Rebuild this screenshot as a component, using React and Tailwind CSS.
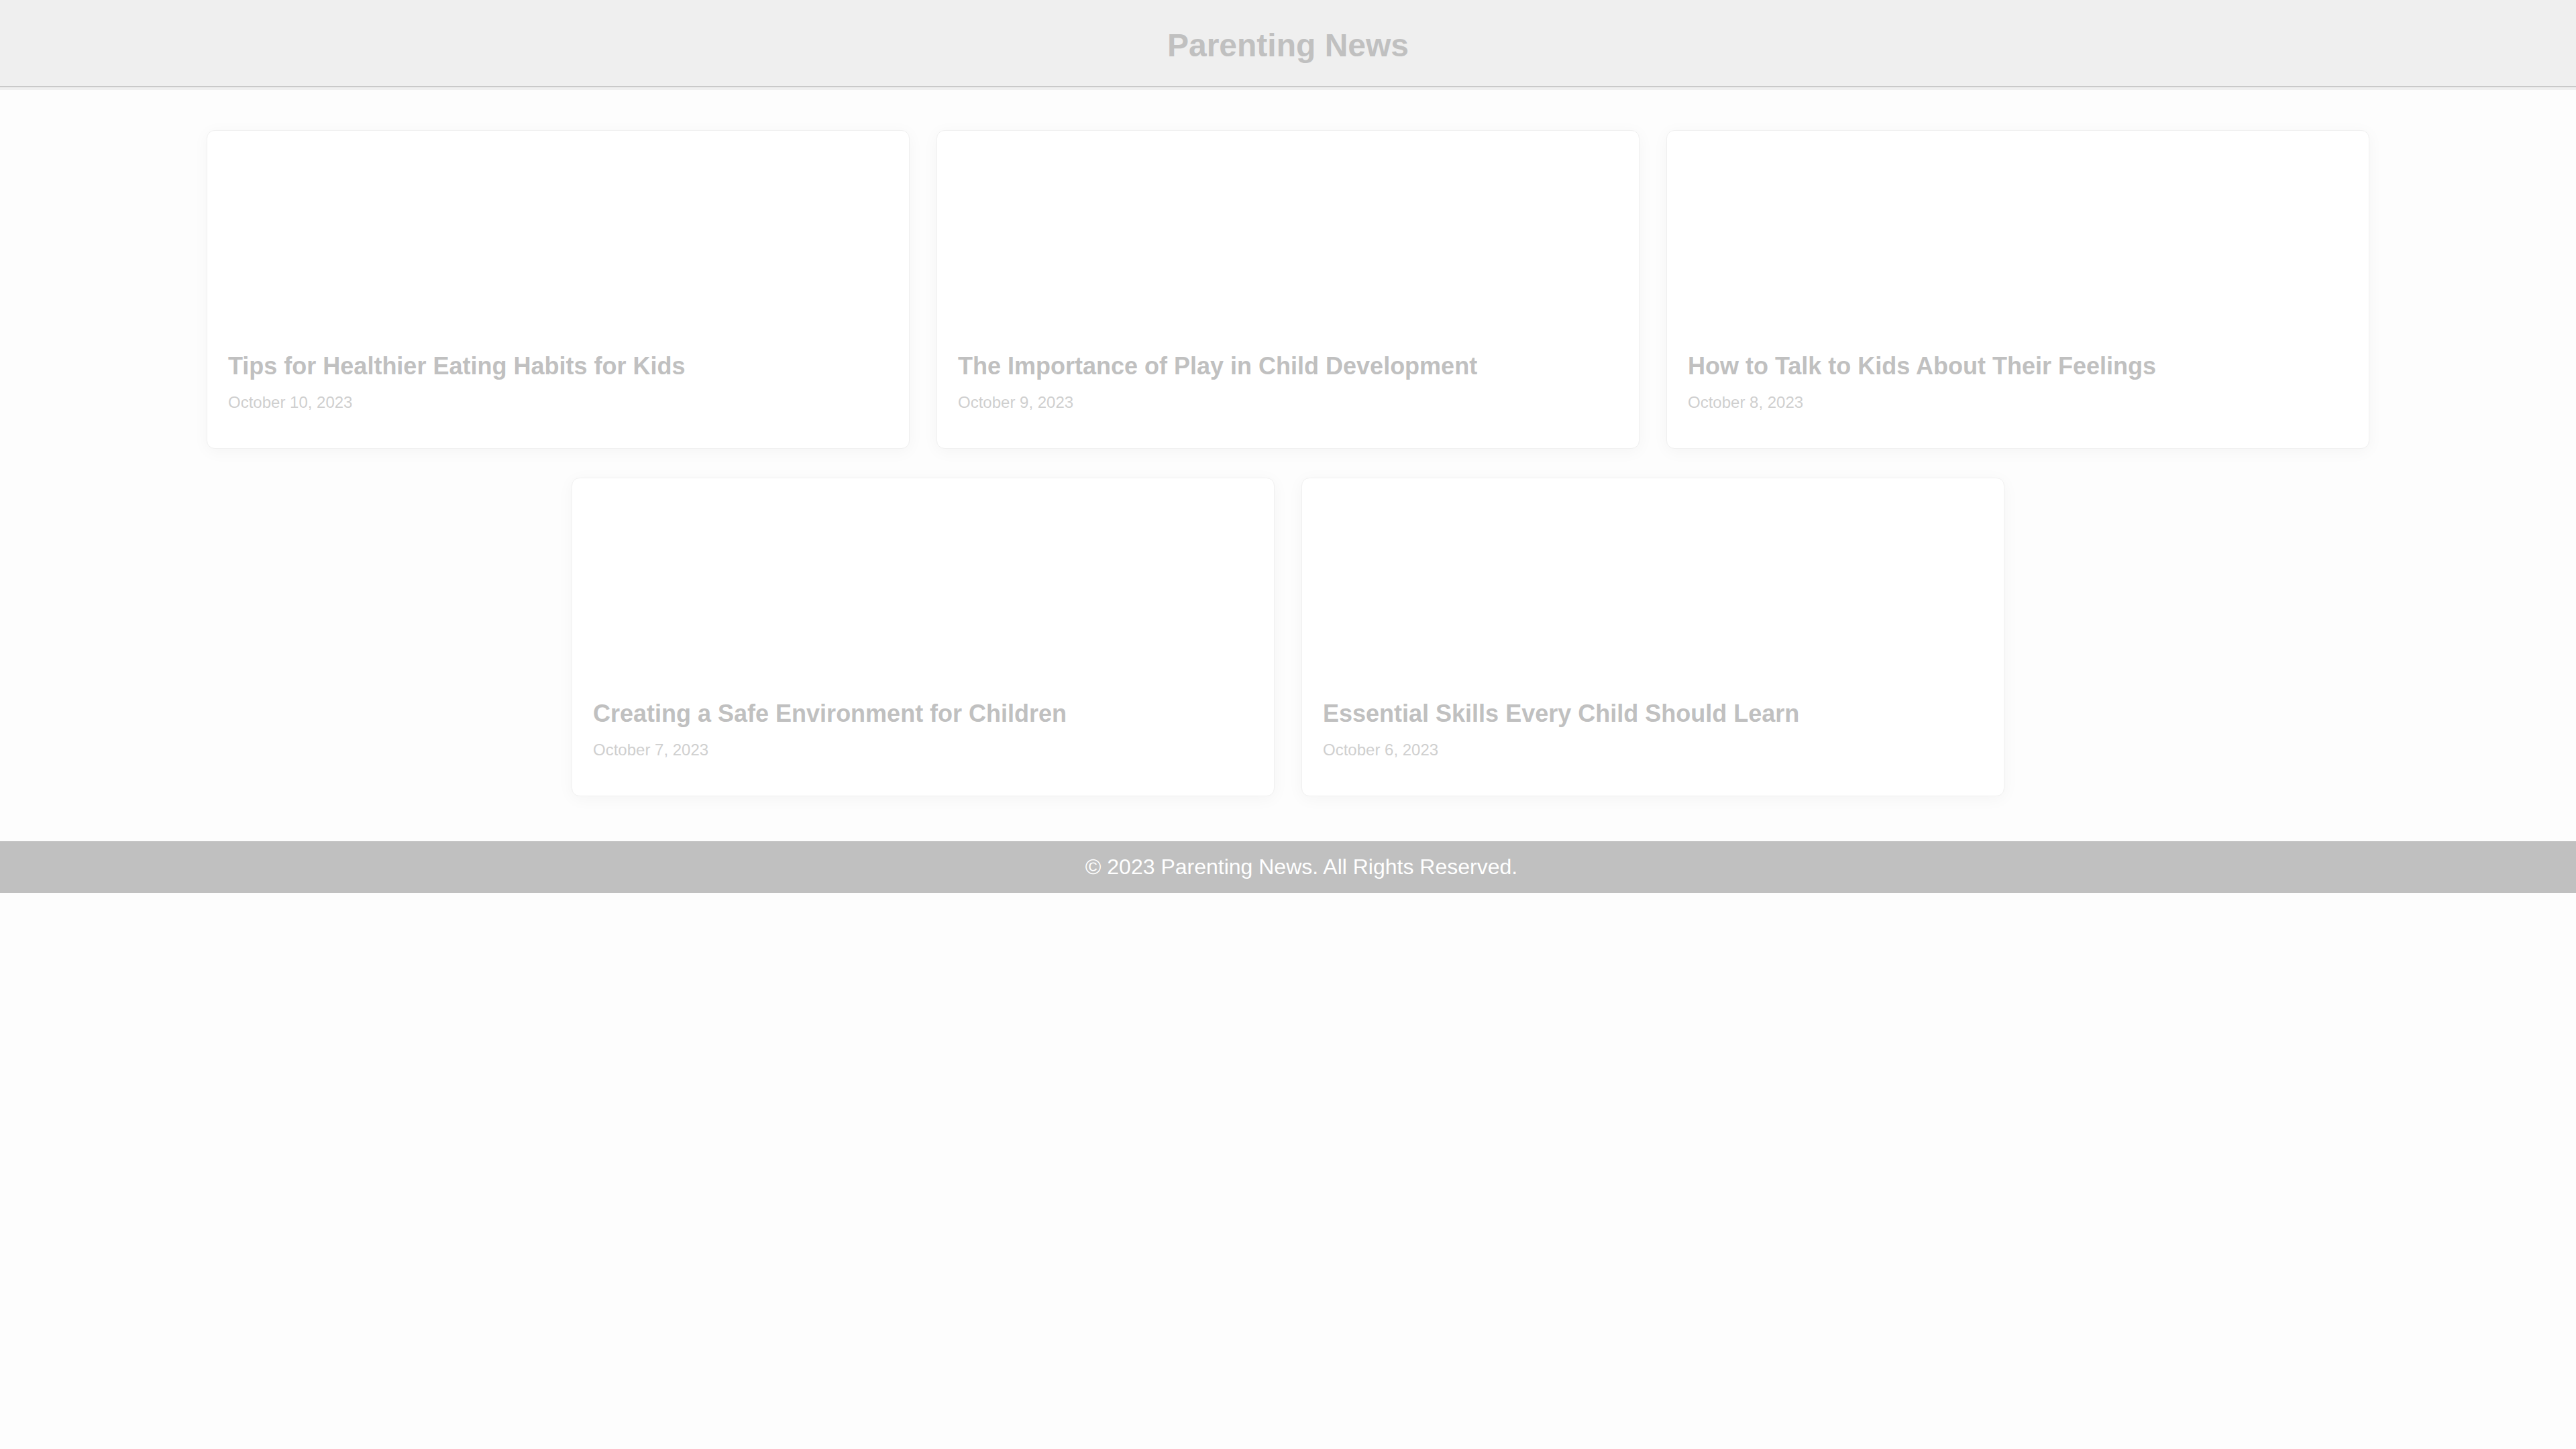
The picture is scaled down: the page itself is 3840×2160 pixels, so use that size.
const articles = [
  { title: "Tips for Healthier Eating Habits for Kids", date: "October 10, 2023" },
  { title: "The Importance of Play in Child Development", date: "October 9, 2023" },
  { title: "How to Talk to Kids About Their Feelings", date: "October 8, 2023" },
  { title: "Creating a Safe Environment for Children", date: "October 7, 2023" },
  { title: "Essential Skills Every Child Should Learn", date: "October 6, 2023" },
];

function Card({ title, date }) {
  return (
    <div className="w-[1048px] h-[475px] flex flex-col bg-white rounded-[12px] border border-[#f0f0f0] shadow-[0_4px_24px_rgba(0,0,0,0.04)] overflow-hidden">
      <div className="h-[298px] shrink-0" />
      <div className="px-[31px] pt-[32px]">
        <h2 className="text-[36px] leading-[1.15] font-bold text-[#c0c0c0]">{title}</h2>
        <p className="mt-[20px] text-[24px] leading-[1.15] text-[#cfcfcf]">{date}</p>
      </div>
    </div>
  );
}

export default function App() {
  return (
    <div
      className="min-h-screen bg-[#fdfdfd]"
      style={{ fontFamily: '"Liberation Sans", Arial, sans-serif' }}
    >
      <header className="bg-[#efefef] pb-[4px]">
        <div className="h-[130px] border-b border-[#999999] flex justify-center pt-[40px] box-border">
          <h1 className="text-[48px] leading-[1.15] font-bold text-[#c0c0c0]">Parenting News</h1>
        </div>
      </header>
      <main className="pt-[60px] pb-[67px] flex flex-wrap justify-center gap-x-[40px] gap-y-[43px] max-w-[3224px] mx-auto">
        {articles.map((a) => (
          <Card key={a.title} title={a.title} date={a.date} />
        ))}
      </main>
      <footer className="bg-[#c0c0c0] py-[20px] pl-[40px] text-center">
        <p className="text-[32px] leading-[1.15] text-white">© 2023 Parenting News. All Rights Reserved.</p>
      </footer>
    </div>
  );
}
